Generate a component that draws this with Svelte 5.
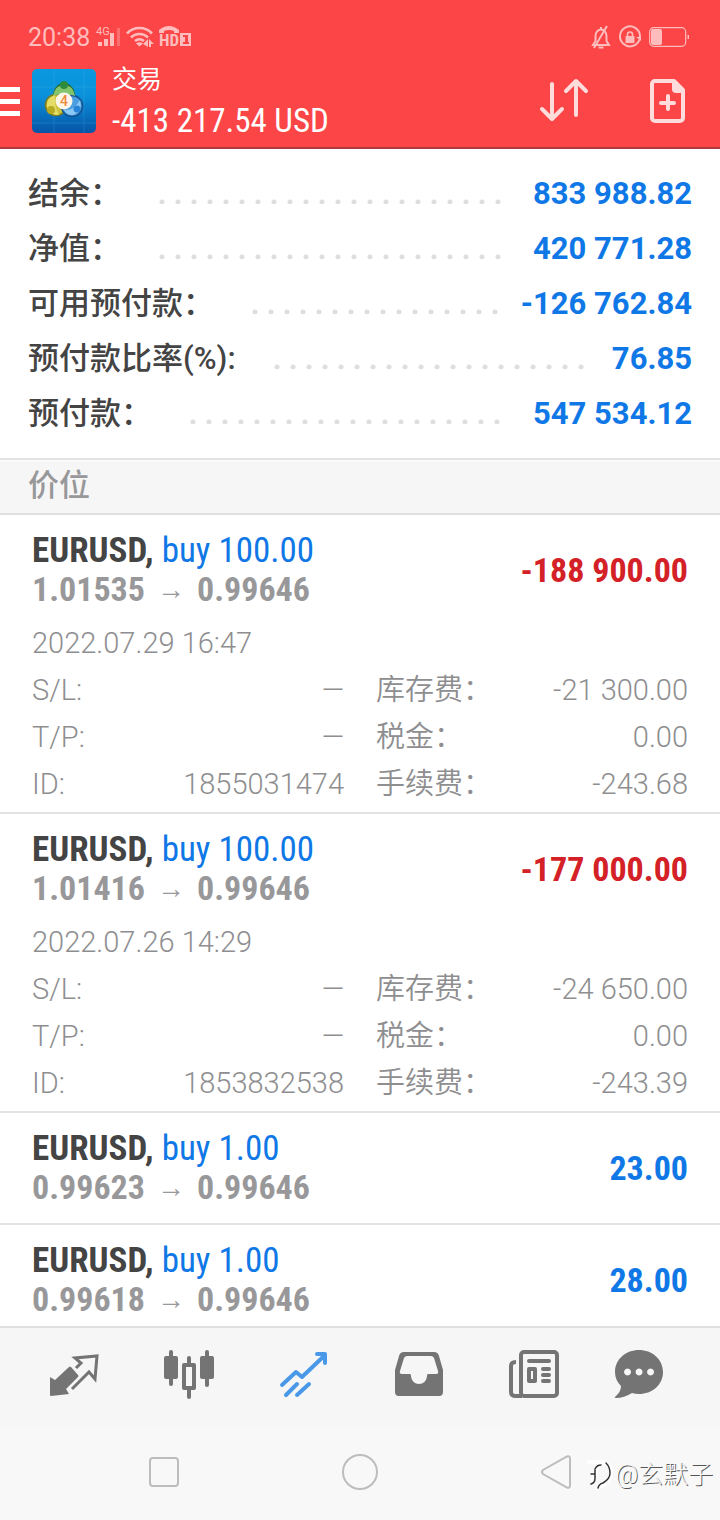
<script lang="ts">
  interface Position {
    symbol: string;
    side: string;
    open: string;
    current: string;
    profit: string;
    details?: {
      time: string;
      id: string;
      swap: string;
      tax: string;
      commission: string;
    };
  }

  const account = [
    { label: '结余：', value: '833 988.82' },
    { label: '净值：', value: '420 771.28' },
    { label: '可用预付款：', value: '-126 762.84' },
    { label: '预付款比率(%):', value: '76.85' },
    { label: '预付款：', value: '547 534.12' },
  ];

  const positions: Position[] = [
    {
      symbol: 'EURUSD',
      side: 'buy 100.00',
      open: '1.01535',
      current: '0.99646',
      profit: '-188 900.00',
      details: { time: '2022.07.29 16:47', id: '1855031474', swap: '-21 300.00', tax: '0.00', commission: '-243.68' },
    },
    {
      symbol: 'EURUSD',
      side: 'buy 100.00',
      open: '1.01416',
      current: '0.99646',
      profit: '-177 000.00',
      details: { time: '2022.07.26 14:29', id: '1853832538', swap: '-24 650.00', tax: '0.00', commission: '-243.39' },
    },
    { symbol: 'EURUSD', side: 'buy 1.00', open: '0.99623', current: '0.99646', profit: '23.00' },
    { symbol: 'EURUSD', side: 'buy 1.00', open: '0.99618', current: '0.99646', profit: '28.00' },
  ];

  const tabs = [
    { id: 'quotes', label: '行情' },
    { id: 'charts', label: '图表' },
    { id: 'trade', label: '交易' },
    { id: 'history', label: '历史' },
    { id: 'news', label: '新闻' },
    { id: 'messages', label: '消息' },
  ];

  let activeTab = $state('trade');
</script>

<div class="app">
  <header class="header">
    <div class="status-bar">
      <span class="clock">20:38</span>
      <svg class="status-left" width="96" height="24" viewBox="0 0 96 24" fill="currentColor">
        <text x="0" y="9" font-size="11">4G</text>
        <rect x="2" y="16" width="4" height="4" />
        <rect x="8" y="13" width="4" height="7" />
        <rect x="14" y="7" width="4" height="13" />
        <rect x="21" y="2" width="3" height="18" opacity="0.35" />
        <g fill="none" stroke="currentColor" stroke-width="2.6">
          <path d="M31 7.500a17 17 0 0 1 25 0" />
          <path d="M35 11.500a12 12 0 0 1 17 0" />
          <path d="M39 15a7 7 0 0 1 9 0" />
        </g>
        <path d="M40 17.500q3.500-2.500 7 0l-3.500 3z" />
        <path d="M47 18l5-5v8zM53 13l5 5h-3v3h-2z" />
        <path d="M63 7V4q10-8 20 0v3h-5V5q-5-2-10 0v2z" />
        <text x="63" y="20" font-size="17" font-weight="700" class="narrow">HD</text>
        <path fill-rule="evenodd" d="M84 7h11v13H84zM87 9v2h2v5h-2v2h6v-2h-1V9z" />
      </svg>
      <div class="status-right">
        <svg width="20" height="24" viewBox="0 0 20 24" fill="none" stroke="currentColor" stroke-width="2">
          <path d="M2 19h16l-2.500-4v-5A5.500 6.500 0 0 0 4.500 10v5z" />
          <path d="M10 3V1M7.500 21.500h5M16 0L3 22" />
        </svg>
        <svg width="22" height="24" viewBox="0 0 22 24">
          <path d="M20.500 13.500A10 10 0 1 1 21 10l-1 3" fill="none" stroke="currentColor" stroke-width="2" />
          <path d="M17 11h5v4z" fill="currentColor" />
          <rect x="6.500" y="10" width="9" height="7" fill="currentColor" />
          <path d="M8.500 10V8.500a2.500 2.500 0 0 1 5 0V10" fill="none" stroke="currentColor" stroke-width="1.600" />
        </svg>
        <svg width="41" height="24" viewBox="0 0 41 24">
          <rect x="0.700" y="1.700" width="36" height="18.600" rx="4" fill="none" stroke="currentColor" stroke-width="1.200" />
          <rect x="2" y="3" width="11" height="16" rx="2" fill="currentColor" />
          <rect x="38.500" y="9" width="1.500" height="4" fill="currentColor" />
        </svg>
      </div>
    </div>

    <div class="title-bar">
      <button class="menu" aria-label="菜单">
        <span></span>
        <span></span>
        <span></span>
      </button>
      <svg class="logo" width="64" height="64" viewBox="0 0 64 64">
        <defs>
          <linearGradient id="logo-bg" x1="0" y1="0" x2="0" y2="1">
            <stop offset="0" stop-color="#0a98de" />
            <stop offset="0.4" stop-color="#0a93dc" />
            <stop offset="1" stop-color="#0654a6" />
          </linearGradient>
        </defs>
        <rect width="64" height="64" rx="5" fill="url(#logo-bg)" />
        <path d="M22 0v64M52 0v64M0 18h64M0 54h64" stroke="#4fb4ea" stroke-width="1" opacity="0.250" />
        <circle cx="32" cy="25" r="10" fill="#5fa856" stroke="#276a35" stroke-width="1.500" />
        <circle cx="24" cy="36" r="10.500" fill="#c9c23c" stroke="#7b7d1f" stroke-width="1.500" />
        <circle cx="40" cy="37" r="10.500" fill="#4b9de0" stroke="#14518f" stroke-width="1.500" />
        <path d="M21 27q2-11 11-11t11 11q-11-5-22 0z" fill="#82c56d" />
        <path d="M15 38q-1-9 8-12q-1 11 4 20q-9 1-12-8z" fill="#e5dc67" />
        <path d="M48 31q3 11-7 15q-7 0-9-5q10 1 16-10z" fill="#8bc8f3" />
        <circle cx="32" cy="16" r="4" fill="#2d8b3c" />
        <circle cx="19" cy="41" r="4" fill="#b7ab22" />
        <circle cx="45" cy="40" r="3.500" fill="#2784d6" />
        <circle cx="32" cy="32" r="8.500" fill="#fff6ea" />
        <text x="32" y="37" text-anchor="middle" font-size="14" font-weight="500" fill="#ef8b3d">4</text>
      </svg>
      <div class="heading">
        <h1>交易</h1>
        <p>-413 217.54 USD</p>
      </div>
      <button class="action" aria-label="排序">
        <svg width="50" height="46" viewBox="0 0 50 46" fill="none" stroke="currentColor" stroke-width="4" stroke-linecap="round" stroke-linejoin="round">
          <path d="M13 6v35M3 31l10 10 10-10M37 37V3M27 13L37 3l10 10" />
        </svg>
      </button>
      <button class="action" aria-label="新订单">
        <svg width="50" height="46" viewBox="0 0 50 46" fill="none" stroke="currentColor" stroke-width="4">
          <path d="M12 3h19l9 9v28a3 3 0 0 1-3 3H12a3 3 0 0 1-3-3V6a3 3 0 0 1 3-3z" stroke-linejoin="round" />
          <path d="M29 3l12 12h-8q-4 0-4-4z" fill="currentColor" stroke="none" />
          <path d="M25 18v13M18 25h13" stroke-linecap="round" />
        </svg>
      </button>
    </div>
  </header>

  <main class="content">
    <dl class="account">
      {#each account as row (row.label)}
        <div class="account-row">
          <dt>{row.label}</dt>
          <span class="leader"></span>
          <dd>{row.value}</dd>
        </div>
      {/each}
    </dl>

    <h2 class="section-title">价位</h2>

    <div class="positions">
      {#each positions as position (position.open)}
        <article class="position" class:expanded={position.details}>
          <div class="summary">
            <div>
              <h3><strong>{position.symbol},</strong> <span class="side">{position.side}</span></h3>
              <p class="prices">
                <span>{position.open}</span>
                <span class="arrow">→</span>
                <span>{position.current}</span>
              </p>
            </div>
            <span class="profit" class:loss={position.profit.startsWith('-')}>{position.profit}</span>
          </div>

          {#if position.details}
            <div class="details">
              <time>{position.details.time}</time>
              <dl class="fields">
                <div><dt>S/L:</dt><dd>—</dd></div>
                <div><dt>库存费：</dt><dd>{position.details.swap}</dd></div>
                <div><dt>T/P:</dt><dd>—</dd></div>
                <div><dt>税金：</dt><dd>{position.details.tax}</dd></div>
                <div><dt>ID:</dt><dd>{position.details.id}</dd></div>
                <div><dt>手续费：</dt><dd>{position.details.commission}</dd></div>
              </dl>
            </div>
          {/if}
        </article>
      {/each}
    </div>
  </main>

  <nav class="tabs">
    {#each tabs as tab (tab.id)}
      <button class:active={activeTab === tab.id} aria-label={tab.label} onclick={() => (activeTab = tab.id)}>
        <svg width="50" height="50" viewBox="0 0 50 50" fill="none" stroke="currentColor">
          {#if tab.id === 'quotes'}
            <path d="M0 30l5 3 14-13q1-1 2 0l7 8q1 1 0 2L16 42l3 5-18 2q-1 0-1-1z" fill="currentColor" stroke="none" />
            <path d="M26 21l5-5-6-5 22-2-2 23-6-7-17 17" stroke-width="3" />
          {:else if tab.id === 'charts'}
            <g fill="currentColor" stroke="none">
              <rect x="-1" y="9" width="14" height="23" rx="2" />
              <rect x="4" y="3" width="4" height="36" rx="2" />
              <rect x="35" y="9" width="14" height="23" rx="2" />
              <rect x="40" y="3" width="4" height="37" rx="2" />
            </g>
            <rect x="19" y="18" width="10" height="23" stroke-width="4" stroke-linejoin="round" />
            <path d="M24 11v6M24 42v8" stroke-width="4" stroke-linecap="round" />
          {:else if tab.id === 'trade'}
            <path d="M2 38l14-13 6 5 22-21M37 7h8v9M6 48l11-11M17 48l12-11" stroke-width="4" stroke-linecap="round" stroke-linejoin="round" />
          {:else if tab.id === 'history'}
            <path fill="currentColor" stroke="none" fill-rule="evenodd" d="M9 5h30q4 0 5 4l4 14v22q0 4-4 4H4q-4 0-4-4V23L4 9q1-4 5-4zM12 9q-2 0-3 2L5 24q-1 3 2 3h8q1 0 1 2a8 8 0 0 0 16 0q0-2 1-2h8q3 0 2-3l-4-13q-1-2-3-2z" />
          {:else if tab.id === 'news'}
            <rect x="11" y="5" width="36" height="44" rx="3" stroke-width="4" />
            <path d="M6 15q-5 0-5 4v26q0 4 5 4h6" stroke-width="4" />
            <path d="M19 14h20M33 22h6M33 28h6M33 34h6" stroke-width="4" stroke-linecap="round" />
            <rect x="19" y="22" width="6" height="12" stroke-width="4" stroke-linejoin="round" />
          {:else}
            <path fill="currentColor" stroke="none" fill-rule="evenodd" d="M24 3c13 0 24 9 24 22s-11 22-24 22q-4 0-7-1-8 5-16 5-2 0-1-1 6-5 6-11Q0 33 0 25C0 12 11 3 24 3zM12.500 21.500a3.500 3.500 0 1 0 .1 0zM24 21.500a3.500 3.500 0 1 0 .1 0zM35.500 21.500a3.500 3.500 0 1 0 .1 0z" />
          {/if}
        </svg>
      </button>
    {/each}
  </nav>

  <footer class="system-nav">
    <button aria-label="最近任务">
      <svg width="40" height="40" viewBox="0 0 40 40"><rect x="6" y="6" width="28" height="28" rx="3" /></svg>
    </button>
    <button aria-label="主屏幕">
      <svg width="40" height="40" viewBox="0 0 40 40"><circle cx="20" cy="20" r="17" /></svg>
    </button>
    <button aria-label="返回">
      <svg width="40" height="40" viewBox="0 0 40 40"><path d="M31 4.500q3-1 3 2v27q0 3-3 2L7 22q-2-2 0-4z" /></svg>
    </button>
    <div class="watermark">
      <svg width="28" height="30" viewBox="0 0 28 30" fill="none" stroke-linecap="round">
        <path d="M2 2h14q9 3 8 12t-11 13l-3 2M6 23V14h3V9q3-5 8-4" stroke="#fff" stroke-width="4" />
        <path d="M19 3q4 4 4 10t-7 10q-4 1-5 5M4 24q4-1 4-6V10M4 14h3M8 9q2-4 6-4" stroke="#333" stroke-width="1.500" />
      </svg>
      <span>@玄默子</span>
    </div>
  </footer>
</div>

<style>
  :global(body) {
    margin: 0;
  }

  .app {
    display: flex;
    flex-direction: column;
    height: 100vh;
    background: #fff;
    color: #444;
    font-family: Roboto, 'Noto Sans CJK SC', sans-serif;
  }

  h1,
  h2,
  h3,
  p,
  dl,
  dd {
    margin: 0;
  }

  button {
    display: flex;
    align-items: center;
    justify-content: center;
    padding: 0;
    border: none;
    background: none;
    color: inherit;
    cursor: pointer;
  }

  svg {
    display: block;
    overflow: visible;
  }

  .narrow {
    font-family: 'Roboto Condensed', 'Liberation Sans Narrow', Roboto, sans-serif;
  }

  /* Header */
  .header {
    flex: none;
    background: #fb4547;
    border-bottom: 2px solid #b23a3c;
    color: #fff;
  }

  .status-bar {
    display: flex;
    align-items: center;
    height: 52px;
    padding: 12px 30px 0 28px;
    color: #ffbcbc;
  }

  .clock {
    font-size: 25px;
    line-height: 30px;
  }

  .status-left {
    margin-left: 6px;
  }

  .status-right {
    display: flex;
    gap: 8px;
    margin-left: auto;
  }

  .title-bar {
    display: flex;
    align-items: center;
    height: 74px;
    padding: 0 27px 9px 0;
  }

  .menu {
    flex-direction: column;
    gap: 7px;
    width: 20px;
    margin-right: 12px;
  }

  .menu span {
    width: 20px;
    height: 5px;
    background: #fff;
  }

  .heading {
    flex: 1;
    margin: 4px 0 0 16px;
  }

  .heading h1 {
    font-size: 25px;
    font-weight: 400;
    line-height: 36px;
  }

  .heading p {
    font-family: 'Roboto Condensed', 'Liberation Sans Narrow', Roboto, sans-serif;
    font-size: 33px;
    line-height: 46px;
  }

  .action {
    margin-left: 54px;
    color: #ffdcdc;
  }

  /* Account summary */
  .content {
    flex: 1;
    min-height: 0;
    overflow: hidden;
  }

  .account {
    padding: 17px 28px;
    border-bottom: 2px solid #e3e3e3;
    font-size: 31px;
    line-height: 55px;
  }

  .account-row {
    display: flex;
    align-items: center;
  }

  .account dt {
    font-weight: 500;
  }

  .account dd {
    color: #0f78e6;
    font-weight: 700;
  }

  .leader {
    flex: 1;
    height: 5px;
    margin: 16px 23px 0 38px;
    background: radial-gradient(circle at 3px 3px, #dedede 2px, transparent 3px) repeat-x;
    background-size: 16px 5px;
  }

  .section-title {
    padding: 0 28px 4px;
    border-top: 2px solid #fbfbfb;
    border-bottom: 2px solid #e0e0e0;
    background: #f6f6f6;
    color: #98989a;
    font-size: 31px;
    font-weight: 500;
    line-height: 47px;
  }

  /* Positions */
  .position {
    padding: 16px 32px;
    border-bottom: 2px solid #e3e3e3;
  }

  .position.expanded {
    padding-bottom: 4px;
  }

  .summary {
    display: flex;
    align-items: center;
    justify-content: space-between;
    font-family: 'Roboto Condensed', 'Liberation Sans Narrow', Roboto, sans-serif;
    font-size: 34px;
    line-height: 39px;
  }

  .summary h3 {
    font-size: 35px;
    font-weight: 400;
  }

  .side {
    color: #0f78e6;
  }

  .prices {
    display: flex;
    gap: 12px;
    color: #98989a;
    font-weight: 700;
  }

  .arrow {
    font-family: 'Liberation Sans', sans-serif;
    font-size: 28px;
    font-weight: 400;
  }

  .profit {
    color: #0f78e6;
    font-weight: 700;
  }

  .profit.loss {
    color: #d32127;
  }

  .details {
    margin-top: 11px;
    color: #8e8e90;
    font-size: 29px;
    font-weight: 350;
    line-height: 47px;
  }

  .details time {
    display: block;
  }

  .fields {
    display: grid;
    grid-template-columns: 1fr 1fr;
    column-gap: 32px;
  }

  .fields div {
    display: flex;
    justify-content: space-between;
  }

  /* Bottom bars */
  .tabs {
    display: flex;
    flex: none;
    height: 88px;
    padding: 0 33px 12px 17px;
    border-top: 2px solid #e0e0e0;
    background: #f6f6f6;
    color: #747474;
  }

  .tabs button {
    flex: 1;
  }

  .tabs button:last-child {
    flex: 0 0 95px;
  }

  .tabs .active {
    color: #4a98e8;
  }

  .system-nav {
    position: relative;
    display: flex;
    flex: none;
    height: 88px;
    padding: 0 66px 4px;
    background: #f8f8f8;
  }

  .system-nav button {
    flex: 1;
  }

  .system-nav button svg {
    fill: none;
    stroke: #bdbdbd;
    stroke-width: 2;
  }

  .watermark {
    position: absolute;
    right: 7px;
    bottom: 28px;
    display: flex;
    align-items: center;
    color: #f8f8f8;
    font-size: 25px;
    font-weight: 300;
    line-height: 34px;
    text-shadow: 1px 1px 0 #555;
  }
</style>
